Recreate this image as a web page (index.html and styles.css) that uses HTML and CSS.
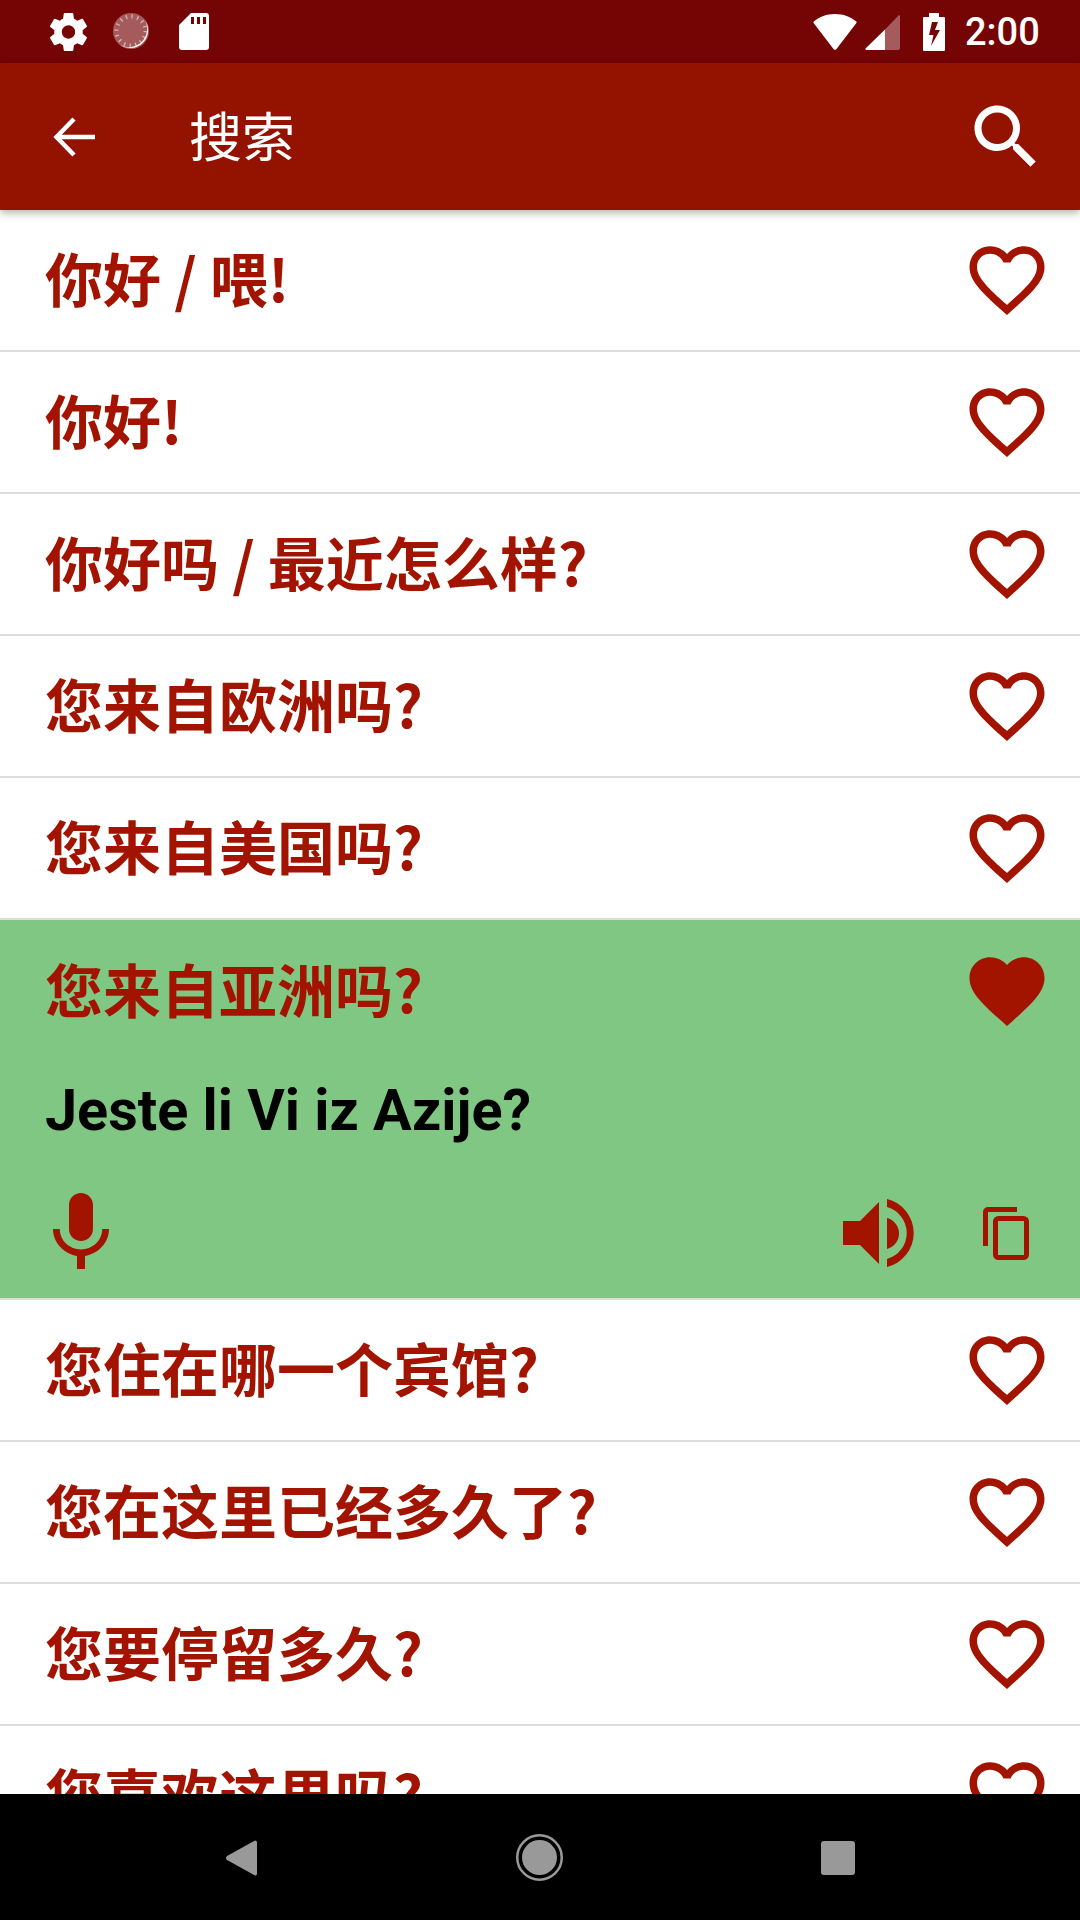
FILE: index.html
```html
<!DOCTYPE html>
<html lang="zh-CN">
<head>
    <meta charset="UTF-8">
    <meta name="viewport" content="width=device-width, initial-scale=1.0">
    <title>搜索</title>
    <link rel="stylesheet" href="styles.css">
</head>
<body>
<div class="phone">
    <div class="status-bar">
        <svg class="st-gear" viewBox="2.3 2 19.4 20"><path fill="#fff" d="M19.43 12.98c.04-.32.07-.64.07-.98s-.03-.66-.07-.98l2.11-1.65c.19-.15.24-.42.12-.64l-2-3.46c-.12-.22-.39-.3-.61-.22l-2.49 1c-.52-.4-1.08-.73-1.69-.98l-.38-2.65C14.46 2.18 14.25 2 14 2h-4c-.25 0-.46.18-.49.42l-.38 2.65c-.61.25-1.17.59-1.69.98l-2.49-1c-.23-.09-.49 0-.61.22l-2 3.46c-.13.22-.07.49.12.64l2.11 1.65c-.04.32-.07.65-.07.98s.03.66.07.98l-2.11 1.65c-.19.15-.24.42-.12.64l2 3.46c.12.22.39.3.61.22l2.49-1c.52.4 1.08.73 1.69.98l.38 2.65c.03.24.24.42.49.42h4c.25 0 .46-.18.49-.42l.38-2.65c.61-.25 1.17-.59 1.69-.98l2.49 1c.23.09.49 0 .61-.22l2-3.46c.12-.22.07-.49-.12-.64l-2.11-1.65zM12 15.5c-1.93 0-3.5-1.57-3.5-3.5s1.57-3.5 3.5-3.5 3.5 1.57 3.5 3.5-1.57 3.5-3.5 3.5z"/></svg>
        <svg class="st-disc" viewBox="0 0 37 37">
            <path fill="#fff" d="M32 7a18 18 0 0 1-25 25a18.500 18.500 0 0 0 25-25z"/>
            <circle cx="18" cy="18" r="18" fill="#fff" fill-opacity=".35"/>
            <circle cx="18" cy="18" r="14.500" fill="none" stroke="#fff" stroke-opacity=".55" stroke-width="4" stroke-dasharray="1.300 4.400"/>
        </svg>
        <svg class="st-sd" viewBox="0 0 30 37"><path fill="#fff" fill-rule="evenodd" d="M12 0h15a3 3 0 0 1 3 3v31a3 3 0 0 1-3 3H3a3 3 0 0 1-3-3V12zM12 4v7h3V4zM18 4v7h3V4zM24 4v7h3V4z"/></svg>
        <svg class="st-wifi" viewBox="0 0 44 36"><path fill="#fff" d="M22 0c8.500 0 15.500 2.800 21 7.200a1.500 1.500 0 0 1 .2 2.100L23.500 35a2 2 0 0 1-3 0L.8 9.300a1.500 1.500 0 0 1 .2-2.100C6.500 2.800 13.500 0 22 0z"/></svg>
        <svg class="st-signal" viewBox="0 0 35 35">
            <path fill="#fff" fill-opacity=".35" d="M20 14.500L33 1a1 1 0 0 1 2 .5V33a2 2 0 0 1-2 2H20z"/>
            <path fill="#fff" d="M20 14.500V35H1.500a1 1 0 0 1-1-1.500z"/>
        </svg>
        <svg class="st-battery" viewBox="0 0 22 38"><path fill="#fff" fill-rule="evenodd" d="M6 0h10v4h5a1 1 0 0 1 1 1v32a1 1 0 0 1-1 1H1a1 1 0 0 1-1-1V5a1 1 0 0 1 1-1h5zM9 9l-3 13h4.500L8 33l9-16h-5l3-8z"/></svg>
        <span class="clock">2:00</span>
    </div>

    <div class="app-bar">
        <svg class="back-arrow" viewBox="0 0 42 42"><path fill="none" stroke="#fff" stroke-width="4.500" d="M42 21H4M21 3L3.500 21L21 39"/></svg>
        <span class="app-title">搜索</span>
        <svg class="search-icon" viewBox="0 0 24 24"><path fill="#fff" d="M15.500 14h-.79l-.28-.27C15.410 12.590 16 11.110 16 9.500 16 5.910 13.090 3 9.500 3S3 5.910 3 9.500 5.910 16 9.500 16c1.610 0 3.090-.59 4.230-1.570l.27.28v.79l5 4.990L20.490 19l-4.990-5zm-6 0C7.010 14 5 11.990 5 9.500S7.010 5 9.500 5 14 7.010 14 9.500 11.990 14 9.500 14z"/></svg>
    </div>

    <div class="list">
        <div class="row"><span class="phrase">你好 / 喂!</span><svg class="heart" viewBox="0 0 24 24"><use href="#heart-line"/></svg></div>
        <div class="row"><span class="phrase">你好!</span><svg class="heart" viewBox="0 0 24 24"><use href="#heart-line"/></svg></div>
        <div class="row"><span class="phrase">你好吗 / 最近怎么样?</span><svg class="heart" viewBox="0 0 24 24"><use href="#heart-line"/></svg></div>
        <div class="row"><span class="phrase">您来自欧洲吗?</span><svg class="heart" viewBox="0 0 24 24"><use href="#heart-line"/></svg></div>
        <div class="row"><span class="phrase">您来自美国吗?</span><svg class="heart" viewBox="0 0 24 24"><use href="#heart-line"/></svg></div>

        <div class="open-row">
            <div class="row row-head"><span class="phrase">您来自亚洲吗?</span><svg class="heart" viewBox="0 0 24 24"><path d="M12 21.350l-1.450-1.320C5.400 15.360 2 12.280 2 8.500 2 5.420 4.420 3 7.500 3c1.740 0 3.410.81 4.500 2.090C13.090 3.810 14.760 3 16.500 3 19.580 3 22 5.420 22 8.500c0 3.780-3.400 6.860-8.550 11.540L12 21.350z"/></svg></div>
            <div class="translation" lang="hr">Jeste li Vi iz Azije?</div>
            <div class="actions">
                <svg class="mic" viewBox="0 0 24 24"><path d="M12 14c1.660 0 2.990-1.340 2.990-3L15 5c0-1.660-1.340-3-3-3S9 3.340 9 5v6c0 1.660 1.340 3 3 3zm5.300-3c0 3-2.540 5.100-5.300 5.100S6.700 14 6.700 11H5c0 3.410 2.720 6.230 6 6.720V21h2v-3.280c3.280-.48 6-3.300 6-6.720h-1.700z"/></svg>
                <svg class="speaker" viewBox="0 0 71 68"><path d="M0 22h17L36 3v62L17 46H0zM44 19a16 16 0 0 1 0 31zM44 0a35 35 0 0 1 0 68v-8a27 27 0 0 0 0-52z"/></svg>
                <svg class="copy" viewBox="0 0 46 53">
                    <path fill="none" stroke="#a31400" stroke-width="5" d="M2.500 39V5a2.500 2.500 0 0 1 2.500-2.500h29"/>
                    <rect x="12.500" y="11.500" width="31" height="39" rx="3" fill="none" stroke="#a31400" stroke-width="5"/>
                </svg>
            </div>
        </div>

        <div class="row"><span class="phrase">您住在哪一个宾馆?</span><svg class="heart" viewBox="0 0 24 24"><use href="#heart-line"/></svg></div>
        <div class="row"><span class="phrase">您在这里已经多久了?</span><svg class="heart" viewBox="0 0 24 24"><use href="#heart-line"/></svg></div>
        <div class="row"><span class="phrase">您要停留多久?</span><svg class="heart" viewBox="0 0 24 24"><use href="#heart-line"/></svg></div>
        <div class="row"><span class="phrase">您喜欢这里吗?</span><svg class="heart" viewBox="0 0 24 24"><use href="#heart-line"/></svg></div>
    </div>

    <div class="nav-bar">
        <svg class="nav-back" viewBox="0 0 31 36"><path fill="#999" d="M29 0.500a2 2 0 0 1 2 1.500v32a2 2 0 0 1-2 1.500L1 20a2.500 2.500 0 0 1 0-4z"/></svg>
        <svg class="nav-home" viewBox="0 0 47 47"><circle cx="23.500" cy="23.500" r="22.250" fill="none" stroke="#999" stroke-width="2.500"/><circle cx="23.500" cy="23.500" r="17.500" fill="#999"/></svg>
        <div class="nav-recent"></div>
    </div>
</div>

<svg class="defs" width="0" height="0">
    <defs>
        <path id="heart-line" d="M16.500 3c-1.740 0-3.410.81-4.500 2.090C10.910 3.810 9.240 3 7.500 3 4.420 3 2 5.420 2 8.500c0 3.780 3.400 6.860 8.550 11.540L12 21.350l1.450-1.320C18.600 15.360 22 12.280 22 8.500 22 5.420 19.580 3 16.500 3zm-4.400 15.550l-.1.1-.1-.1C7.140 14.240 4 11.390 4 8.500 4 6.500 5.500 5 7.500 5c1.540 0 3.040.99 3.570 2.360h1.870C13.460 5.990 14.960 5 16.500 5c2 0 3.500 1.500 3.500 3.500 0 2.890-3.140 5.740-7.900 10.050z"/>
    </defs>
</svg>
</body>
</html>
```

FILE: styles.css
```css
/* Phrasebook search screen */
* {
    box-sizing: border-box;
}
body {
    margin: 0;
    font-family: Roboto, "Noto Sans CJK SC", sans-serif;
}
svg {
    display: block;
    flex: none;
}
.defs {
    position: absolute;
}
.phone {
    width: 1080px;
    height: 1920px;
    display: flex;
    flex-direction: column;
    overflow: hidden;
    background-color: #fff;
}

/* status bar */
.status-bar {
    height: 63px;
    flex: none;
    display: flex;
    align-items: center;
    padding-left: 50px;
    background-color: #750404;
    color: #fff;
}
.st-gear {
    width: 37px;
    height: 38px;
}
.st-disc {
    width: 37px;
    height: 37px;
    margin-left: 26px;
}
.st-sd {
    width: 30px;
    height: 37px;
    margin-left: 29px;
}
.st-wifi {
    width: 44px;
    height: 36px;
    margin-left: 604px;
}
.st-signal {
    width: 35px;
    height: 35px;
    margin-left: 8px;
    margin-top: 2px;
}
.st-battery {
    width: 22px;
    height: 38px;
    margin-left: 23px;
}
.clock {
    margin-left: 20px;
    font-size: 38px;
    font-weight: 500;
    line-height: 44px;
    padding-top: 1px;
}

/* app bar */
.app-bar {
    height: 147px;
    flex: none;
    display: flex;
    align-items: center;
    position: relative;
    z-index: 2;
    padding-left: 53px;
    background-color: #941200;
    box-shadow: 0 3px 8px rgba(0, 0, 0, 0.3);
    color: #fff;
}
.back-arrow {
    width: 42px;
    height: 42px;
}
.app-title {
    margin-left: 94px;
    padding-top: 4px;
    font-size: 53px;
    line-height: 60px;
}
.search-icon {
    width: 84px;
    height: 84px;
    margin-left: auto;
    margin-right: 32px;
}

/* phrase list */
.list {
    flex: 1;
    overflow: hidden;
}
.row {
    height: 142px;
    display: flex;
    align-items: center;
    justify-content: space-between;
    padding: 0 28px 0 45px;
    border-bottom: 2px solid #ddd;
}
.phrase {
    padding-bottom: 6px;
    font-family: "Noto Sans CJK SC", sans-serif;
    font-size: 58px;
    line-height: 80px;
    font-weight: 700;
    color: #a31400;
}
.heart {
    width: 90px;
    height: 90px;
    fill: #a31400;
}
.open-row {
    height: 380px;
    background-color: #81c784;
    border-bottom: 2px solid #ddd;
}
.row-head {
    border-bottom: none;
}
.translation {
    height: 96px;
    padding: 1px 0 0 45px;
    font-size: 57.5px;
    line-height: 96px;
    font-weight: 700;
    color: #000;
}
.actions {
    height: 140px;
    display: flex;
    align-items: center;
    padding: 10px 0 0 33px;
}
.mic {
    width: 96px;
    height: 96px;
    fill: #a31400;
}
.speaker {
    width: 71px;
    height: 68px;
    margin-left: auto;
    fill: #a31400;
}
.copy {
    width: 46px;
    height: 53px;
    margin-left: 69px;
    margin-right: 51px;
}

/* navigation bar */
.nav-bar {
    height: 126px;
    flex: none;
    display: flex;
    align-items: center;
    padding-left: 226px;
    background-color: #000;
}
.nav-back {
    width: 31px;
    height: 36px;
    margin-top: 1px;
}
.nav-home {
    width: 47px;
    height: 47px;
    margin-left: 259px;
    margin-top: 1px;
}
.nav-recent {
    width: 34px;
    height: 34px;
    margin-left: 258px;
    margin-top: 1px;
    border-radius: 3px;
    background-color: #999;
}
```
